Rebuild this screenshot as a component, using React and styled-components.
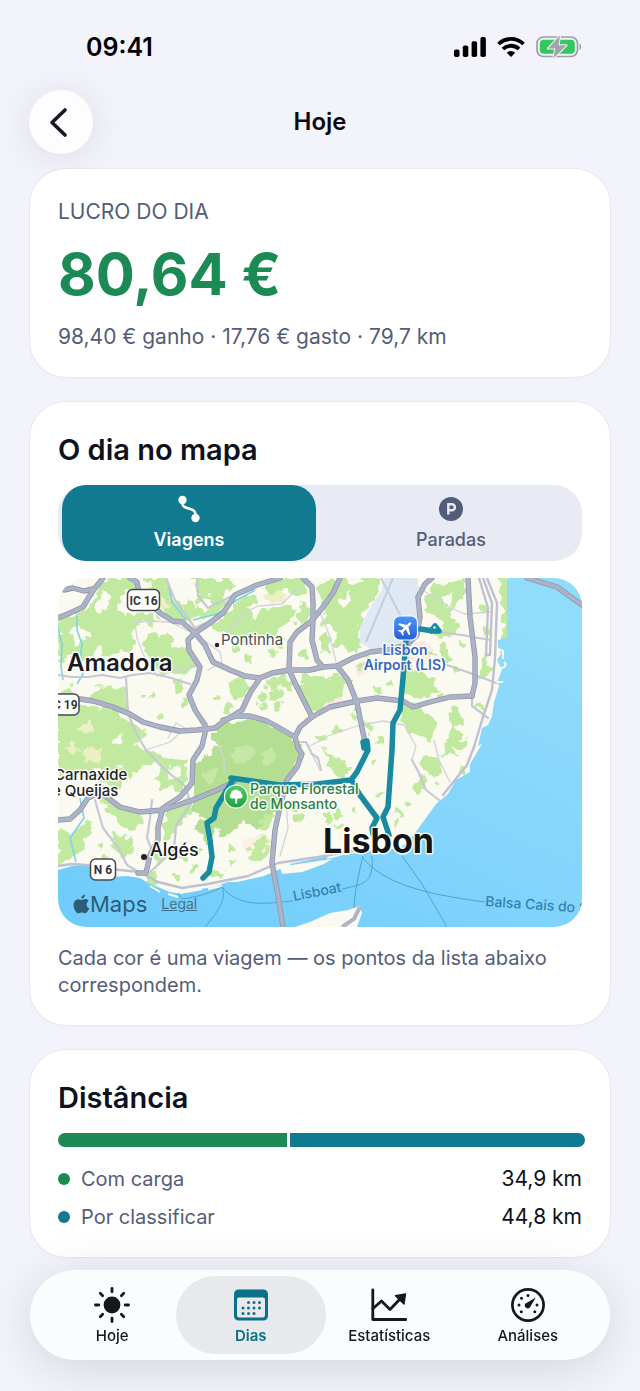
import React, { useState } from "react";
import styled, { createGlobalStyle } from "styled-components";

const c = {
  page: "#f2f3fb",
  ink: "#0e1220",
  muted: "#545d78",
  teal: "#117a90",
  green: "#1b8a54",
  track: "#e8ebf4",
};

const GlobalStyle = createGlobalStyle`
  * { box-sizing: border-box; }
  body {
    margin: 0;
    background: ${c.page};
    color: ${c.ink};
    font-family: Inter, "Liberation Sans", sans-serif;
    -webkit-font-smoothing: antialiased;
  }
  h1, h2, p, dl, dd, dt { margin: 0; }
  button { border: 0; padding: 0; font: inherit; cursor: pointer; }
  svg { display: block; }
`;

const Screen = styled.div`
  display: flex;
  flex-direction: column;
  padding-bottom: 134px;
`;

const StatusBar = styled.header`
  display: flex;
  align-items: center;
  justify-content: space-between;
  height: 90px;
  padding: 4px 58px 0 86px;
`;

const Clock = styled.time`
  font-size: 25px;
  line-height: 28px;
  font-weight: 600;
  color: #000;
`;

const StatusIcons = styled.div`
  display: flex;
  align-items: center;
  gap: 11px;
`;

const NavBar = styled.nav`
  display: grid;
  grid-template-columns: 64px 1fr 64px;
  align-items: center;
  padding: 0 29px;
`;

const BackButton = styled.button`
  display: grid;
  place-items: center;
  width: 64px;
  height: 64px;
  border-radius: 50%;
  background: #fdfdff;
  color: #16181d;
  box-shadow: 0 4px 40px rgba(0, 0, 0, 0.1);
`;

const PageTitle = styled.h1`
  font-size: 24px;
  line-height: 32px;
  font-weight: 600;
  text-align: center;
  color: #0a0a0c;
`;

const Content = styled.main`
  display: flex;
  flex-direction: column;
  gap: 25px;
  padding: 15px 30px 0;
`;

const Card = styled.section`
  display: flex;
  flex-direction: column;
  padding: 28px 28px ${(p) => p.$bottom}px;
  border-radius: 36px;
  background: #fff;
  box-shadow: 0 0 0 1px rgba(20, 30, 60, 0.04), 0 2px 8px rgba(20, 30, 60, 0.02);
`;

const CardTitle = styled.h2`
  margin-bottom: 15px;
  font-size: 29px;
  line-height: 40px;
  font-weight: 600;
`;

const Note = styled.p`
  font-size: 21px;
  line-height: 30px;
  color: ${c.muted};
`;

const Caption = styled(Note)`
  font-size: 20px;
  line-height: 27px;
`;

const Profit = styled.p`
  margin: 13px 0 14px;
  font-size: 58px;
  line-height: 68px;
  font-weight: 700;
  color: ${c.green};
`;

const Segments = styled.div`
  display: grid;
  grid-template-columns: 1fr 1fr;
  gap: 8px;
  margin-bottom: 17px;
  padding: 0 4px;
  border-radius: 28px;
  background: ${c.track};
`;

const Segment = styled.button`
  display: flex;
  flex-direction: column;
  align-items: center;
  gap: 4px;
  padding: 10px 0 8px;
  border-radius: 24px;
  background: ${(p) => (p.$active ? c.teal : "transparent")};
  color: ${(p) => (p.$active ? "#fff" : c.muted)};
  font-size: 18px;
  line-height: 26px;
  font-weight: ${(p) => (p.$active ? 600 : 500)};
`;

const MapFrame = styled.div`
  position: relative;
  margin-bottom: 18px;
  border-radius: 28px;
  overflow: hidden;
`;

const MapSvg = styled.svg`
  width: 100%;
  height: auto;
  font-family: Inter, sans-serif;
`;

const Attribution = styled.div`
  position: absolute;
  left: 15px;
  bottom: 8px;
  display: flex;
  align-items: center;
  color: #2c5c78;
  font-size: 22px;
  line-height: 30px;
  a {
    margin-left: 14px;
    color: #45728c;
    font-size: 14px;
  }
`;

const Bar = styled.div`
  display: flex;
  gap: 3px;
  height: 14px;
  margin-bottom: 13px;
`;

const BarPart = styled.span`
  flex: none;
  background: ${(p) => p.$color};
  &:first-child { border-radius: 7px 0 0 7px; }
  &:last-child { border-radius: 0 7px 7px 0; }
`;

const Legend = styled.dl`
  font-size: 21px;
  line-height: 38px;
`;

const LegendRow = styled.div`
  display: flex;
  align-items: center;
  dt { flex: 1; color: ${c.muted}; font-size: 20px; }
`;

const Dot = styled.span`
  width: 12px;
  height: 12px;
  margin-right: 11px;
  border-radius: 50%;
  background: ${(p) => p.$color};
`;

const TabBar = styled.nav`
  position: fixed;
  left: 30px;
  right: 30px;
  bottom: 31px;
  display: grid;
  grid-template-columns: repeat(4, 1fr);
  padding: 6px 13px;
  border-radius: 45px;
  background: #fbfcfe;
  box-shadow: 0 8px 50px rgba(0, 0, 0, 0.13);
`;

const Tab = styled.button`
  display: flex;
  flex-direction: column;
  align-items: center;
  gap: 4px;
  height: 78px;
  margin: 0 -6px;
  padding-top: 11px;
  border-radius: 39px;
  background: ${(p) => (p.$active ? "#e8e9ec" : "transparent")};
  color: ${(p) => (p.$active ? "#0a7188" : "#15171b")};
  font-size: 15px;
  line-height: 18px;
  font-weight: ${(p) => (p.$active ? 600 : 500)};
`;

function SignalIcon() {
  return (
    <svg width="32" height="20" viewBox="0 0 32 20" aria-hidden="true">
      <rect x="0" y="12.500" width="5.500" height="7.500" rx="1.800" />
      <rect x="8.800" y="8.500" width="5.500" height="11.500" rx="1.800" />
      <rect x="17.600" y="4.300" width="5.500" height="15.700" rx="1.800" />
      <rect x="26.400" y="0" width="5.500" height="20" rx="1.800" />
    </svg>
  );
}

function WifiIcon() {
  return (
    <svg width="28" height="20" viewBox="0 0 28 20" aria-hidden="true">
      <g fill="none" stroke="#000" strokeWidth="3.800">
        <path d="M1.500 7a18 18 0 0 1 25 0" />
        <path d="M6 12a11.500 11.500 0 0 1 16 0" />
      </g>
      <path d="M9.800 15.800a6.500 6.500 0 0 1 8.400 0L14 20z" />
    </svg>
  );
}

function BatteryIcon() {
  return (
    <svg width="46" height="24" viewBox="0 0 46 24" aria-hidden="true">
      <rect x="1" y="2" width="40.500" height="19.500" rx="6.500" fill="none" stroke="#9c9ea5" strokeWidth="1.700" />
      <path d="M43.500 8.500c2.200 1.200 2.200 5.300 0 6.500z" fill="#9c9ea5" />
      <rect x="3.800" y="4.800" width="35" height="14" rx="4" fill="#32c85b" />
      <path d="M24 .5 12 13.500h7.300L17.500 23.500 30.500 10.200h-7.800z" fill="#a2a4ac" stroke="#f2f3fb" strokeWidth="2" strokeLinejoin="round" paintOrder="stroke" />
    </svg>
  );
}

function BackIcon() {
  return (
    <svg width="32" height="32" viewBox="0 0 32 32" fill="none" stroke="currentColor" strokeWidth="3.600" strokeLinecap="round" strokeLinejoin="round" aria-hidden="true">
      <path d="M20 4 7 16.500 20 29" />
    </svg>
  );
}

function TripIcon() {
  return (
    <svg width="28" height="28" viewBox="0 0 28 28" aria-hidden="true">
      <circle cx="7.500" cy="5" r="4.200" fill="currentColor" />
      <circle cx="20.500" cy="23" r="4.200" fill="currentColor" />
      <path d="M7.500 5v4c0 6 13 3 13 10v4" fill="none" stroke="currentColor" strokeWidth="2.600" />
    </svg>
  );
}

function ParkingIcon() {
  return (
    <svg width="28" height="28" viewBox="0 0 28 28" aria-hidden="true">
      <circle cx="14" cy="14" r="12" fill="currentColor" />
      <path d="M11.300 19.500V9.300h3.600a3 3 0 0 1 0 6h-3.600" fill="none" stroke="#e8ebf4" strokeWidth="2.400" />
    </svg>
  );
}

function SunIcon() {
  return (
    <svg width="36" height="36" viewBox="0 0 36 36" aria-hidden="true">
      <circle cx="18" cy="18" r="8.400" fill="currentColor" />
      <g stroke="currentColor" strokeWidth="2.800" strokeLinecap="round">
        {[0, 45, 90, 135, 180, 225, 270, 315].map((a) => (
          <path key={a} d="M18 1.400v3.400" transform={`rotate(${a} 18 18)`} />
        ))}
      </g>
    </svg>
  );
}

const calendarDots = [
  [15.5, 15.5], [21, 15.5], [26.5, 15.5],
  [10, 21], [15.5, 21], [21, 21], [26.5, 21],
  [10, 26.5], [15.5, 26.5], [21, 26.5],
];

function CalendarIcon() {
  return (
    <svg width="36" height="36" viewBox="0 0 36 36" aria-hidden="true">
      <path
        fillRule="evenodd"
        fill="currentColor"
        d="M5.500 2.500h25a4.500 4.500 0 0 1 4.500 4.500v22a4.500 4.500 0 0 1-4.500 4.500h-25A4.500 4.500 0 0 1 1 29V7a4.500 4.500 0 0 1 4.500-4.500zM6 10.500a2 2 0 0 0-2 2v15.500a2.500 2.500 0 0 0 2.500 2.500h23a2.500 2.500 0 0 0 2.500-2.500V12.500a2 2 0 0 0-2-2z"
      />
      <g fill="currentColor">
        {calendarDots.map(([x, y]) => (
          <circle key={`${x}-${y}`} cx={x} cy={y} r="1.500" />
        ))}
      </g>
    </svg>
  );
}

function ChartIcon() {
  return (
    <svg width="36" height="36" viewBox="0 0 36 36" fill="none" stroke="currentColor" strokeWidth="2.800" strokeLinecap="round" strokeLinejoin="round" aria-hidden="true">
      <path d="M1.800 3v29.500H35" />
      <path d="M2 21.500 10.500 14l8.500 8.500L29.500 11.500" />
      <path d="M24.500 8.800 34.500 7l-1.500 10z" fill="currentColor" strokeWidth="1.400" />
    </svg>
  );
}

function GaugeIcon() {
  const ticks = [[9, 18], [11.5, 11.3], [18, 8.5], [27, 18], [24.8, 24.7], [11.3, 24.7]];
  return (
    <svg width="36" height="36" viewBox="0 0 36 36" aria-hidden="true">
      <circle cx="18" cy="18" r="15.600" fill="none" stroke="currentColor" strokeWidth="2.700" />
      {ticks.map(([x, y]) => (
        <circle key={`${x}-${y}`} cx={x} cy={y} r="1.500" fill="currentColor" />
      ))}
      <path d="M25.800 10.600 20 20.200a2.900 2.900 0 1 1-4.400-3.800z" fill="currentColor" />
    </svg>
  );
}

const parks = [
  "0,42 14,37 28,31 37,15 48,0 73,0 77,9 70,14 62,18 60,31 67,37 76,34 100,38 92,48 82,45 74,56 79,64 72,78 62,70 54,80 42,72 34,76 24,86 16,78 0,84",
  "0,2 6,6 0,12",
  "88,0 106,0 114,18 125,30 130,20 138,28 139,4 130,0 172,0 178,6 168,18 171,30 160,35 148,42 128,43 118,39 110,40 104,30 95,21",
  "150,48 168,37 180,22 198,15 196,26 210,34 226,27 238,30 237,45 222,50 214,62 200,58 186,65 178,55 168,58 160,50",
  "204,8 228,0 245,0 250,12 240,20 228,12 214,16",
  "82,64 95,54 104,60 109,55 116,60 113,68 129,71 138,87 126,97 110,92 102,98 95,82",
  "38,108 67,110 69,137 50,128 24,121 36,117",
  "0,130 24,128 48,130 68,141 88,153 80,166 83,180 75,190 62,186 54,197 36,190 24,198 12,193 0,200",
  "175,100 186,97 187,106 194,110 186,122 174,118 170,108",
  "212,101 222,98 230,100 236,112 226,109 215,114 207,108",
  "238,110 258,96 270,101 282,92 290,106 283,118 274,121 264,131 252,134 246,120",
  "260,8 278,2 291,2 304,6 300,0 324,0 318,19 304,36 300,56 306,70 290,76 286,66 278,68 275,48 262,46 268,32 262,24",
  "241,25 252,28 251,41 240,49",
  "262,56 274,60 269,80 262,70",
  "375,8 390,4 406,0 406,18 398,24 392,34 400,44 396,56 384,61 376,53 385,43 371,34 366,20",
  "441,0 455,0 455,62 444,60 445,40 442,22",
  "348,80 356,91 370,97 381,112 371,119 357,121 344,113 346,98",
  "345,124 364,130 377,143 378,158 371,166 350,153 342,140",
  "390,134 400,130 405,144 396,149 405,157 397,168 388,164 393,151",
  "420,80 430,76 429,86 438,91 431,99 420,101",
  "390,162 410,162 404,171 392,171 402,178 384,179",
  "363,182 376,176 385,190 382,198 368,194",
  "358,200 368,198 367,210 358,215 354,206",
  "264,169 272,174 284,180 292,192 286,202 274,195 272,184",
  "68,173 80,165 94,176 116,181 128,184 129,202 120,212 108,210 96,202 85,210 70,200 62,210 47,206 37,199 52,190 64,190",
  "40,213 54,221 66,230 82,237 85,244 74,252 60,248 56,240 48,231",
  "0,250 15,254 30,243 36,252 24,260 26,272 12,282 0,286",
  "52,253 64,258 75,262 76,274 66,281 57,273",
  "109,232 121,224 132,221 133,236 120,246 119,254 106,267 104,250",
  "96,272 109,278 104,286 92,294 87,302 95,310 104,306 97,297",
  "150,298 156,292 169,295 163,302",
  "196,262 207,258 212,268 203,283 190,284",
  "170,121 177,128 171,137 163,130",
  "188,244 200,228 218,238 214,252 202,250",
];

const clearings = [
  "14,52 28,50 32,58 20,66 12,60",
  "40,16 52,14 50,24 44,34 38,28",
  "140,24 152,18 156,28 146,34",
  "280,20 292,14 294,22 284,30",
  "55,160 66,156 64,165 54,168",
  "86,190 98,184 104,192 94,200",
  "110,190 120,188 122,198 112,202",
  "192,30 202,26 204,34 194,40",
  "384,18 394,16 392,26 386,30",
  "76,194 88,190 96,196 90,214 79,220 70,212",
];

const sand = [
  "18,150 30,145 38,152 28,158",
  "8,168 18,164 22,172 12,178",
  "24,172 42,168 44,180 30,188",
  "100,18 108,20 110,30 104,32",
  "204,16 222,12 230,20 214,26",
];

// Scattered small gardens; each entry is the centre and size of one patch.
const gardens = [
  [86, 118, 3], [94, 120, 3], [120, 108, 5], [126, 126, 4], [104, 138, 3], [180, 70, 4], [192, 82, 5], [214, 74, 4],
  [222, 66, 5], [205, 118, 5], [220, 128, 4], [245, 75, 5], [248, 100, 5], [304, 90, 4], [320, 112, 5], [332, 108, 3],
  [296, 140, 5], [310, 148, 4], [322, 164, 4], [278, 152, 5], [264, 160, 4], [388, 80, 5], [398, 92, 4], [404, 66, 4],
  [374, 76, 3], [420, 128, 4], [378, 205, 3], [316, 184, 3], [321, 217, 4], [342, 236, 4], [340, 245, 3], [270, 240, 6],
  [281, 237, 4], [282, 250, 3], [296, 234, 3], [174, 270, 5], [192, 275, 4], [174, 284, 3], [126, 280, 4], [136, 290, 3],
  [140, 272, 4], [46, 280, 3], [40, 268, 3], [242, 240, 6], [236, 228, 4], [424, 30, 4], [428, 54, 4], [350, 226, 3],
  [160, 120, 3], [58, 90, 3], [14, 104, 3], [8, 116, 4], [220, 180, 4], [118, 298, 3], [404, 192, 4], [206, 128, 4],
  [218, 118, 5], [198, 126, 3], [262, 116, 5], [300, 130, 4], [382, 118, 3], [386, 72, 5], [392, 48, 4], [310, 84, 3],
];

const streets = [
  "77,45 79,60 85,76 99,98 120,92 142,86",
  "77,45 90,43 112,44 137,56 162,74 164,84 150,92",
  "168,56 186,35 200,28 224,26 240,10",
  "88,172 112,164 127,150 118,145 110,160",
  "361,10 372,17 391,29 406,36 434,34",
  "262,34 272,59 278,84",
  "252,168 270,158 299,148 325,143 346,147 358,168 354,182",
  "252,172 262,192",
  "376,162 381,182 392,204",
  "159,164 166,180 166,194",
  "228,225 230,250 222,278",
];

const avenues = [
  "0,97 14,99 30,99 44,97 62,100 74,97 92,95 110,99 132,106",
  "68,100 70,135 78,155 88,172 105,190 127,208 133,225 118,248 116,272 92,294",
  "108,0 116,20 124,32 137,50 160,39",
  "139,0 140,18 150,30 174,18",
  "37,222 45,250 59,268 69,287 84,296",
  "94,222 92,240 89,260 94,272 90,280",
  "378,54 404,57 432,62",
  "386,86 412,95 438,105",
  "414,118 414,128 430,140",
  "354,182 361,195 368,212 381,222",
  "240,164 248,164 254,176 260,180 263,192",
];

const coastRoads = [
  "0,288 14,286 28,287 52,291 82,294 100,304 124,310 150,306 190,298 220,285 260,279 300,272",
  "425,0 434,25 432,77 428,77 430,30 421,0",
  "429,0 439,25 437,80 434,112 425,139 415,172 417,166 409,187 385,217",
];

const highways = [
  "0,40 12,35 25,29 34,14 45,0",
  "6,12 15,10 26,13 35,11",
  "72,0 79,4 81,14 102,35 115,43 124,44 137,55 147,67 155,84 172,92 187,98 202,100 214,95 232,92 252,92 265,89 279,88 295,80 312,74 330,72 350,66 359,57 362,39 360,19 367,6 374,0",
  "137,55 149,47 165,35 177,17 199,7 222,0",
  "137,55 130,62 131,72 142,89 139,102 131,117 137,132 147,147 147,155 144,168 135,182 134,205 122,219 105,230 100,249 100,262 92,277 88,295 80,295",
  "22,121 35,123 55,129 72,136 85,144 102,149 122,153 139,152 157,150 165,144 184,132 192,115 202,100",
  "165,142 179,138 192,138 209,143 225,152 237,159 240,170 244,176 239,189 229,202 222,229 217,252 214,285 219,312 225,349",
  "237,159 242,149 254,139 272,129 299,123 319,120 345,123 355,129 372,124 392,119 414,118",
  "245,0 254,9 255,25 255,42 239,54 232,64 231,92 239,109 254,139",
  "255,42 254,62 259,82 265,89",
  "252,45 265,29 275,15 282,0",
  "279,88 290,102 299,125 304,150 307,164",
  "410,0 412,39 417,79 417,105 414,118",
  "469,0 499,9 524,27",
  "0,242 12,241 22,232 30,220 42,214 62,229 82,234 105,232 135,222 159,212 176,204",
];

const trips = [
  "145,300 151,294 154,279 152,262 149,245 156,240 158,230 175,202 173,200 222,207 259,206 293,202 299,194 310,172 309,163 305,164 306,170",
  "294,203 302,217 319,240 314,250 315,256",
  "362,51 376,53 381,53 377,48 373,53",
  "348,62 345,100 342,132 335,145 334,172 330,229 325,239 331,257",
];

const patch = ([x, y, r], i) => {
  const corners = 7;
  return Array.from({ length: corners }, (_, k) => {
    const a = (k / corners) * Math.PI * 2 + i;
    const d = r * (0.7 + 0.5 * Math.abs(Math.sin(i * 7 + k * 5)));
    return `${(x + d * Math.cos(a)).toFixed(1)},${(y + d * Math.sin(a)).toFixed(1)}`;
  }).join(" ");
};

function Lines({ items, ...rest }) {
  return (
    <g fill="none" strokeLinejoin="round" strokeLinecap="round" {...rest}>
      {items.map((points) => (
        <polyline key={points} points={points} />
      ))}
    </g>
  );
}

function RoadShield({ x, y, width, label }) {
  return (
    <g>
      <rect x={x} y={y} width={width} height="21" rx="5" fill="#fff" stroke="#454950" strokeWidth="1.500" />
      <text x={x + width / 2} y={y + 15} textAnchor="middle" fontSize="12" fontWeight="700" fill="#33363b" fontFamily="Roboto, sans-serif">
        {label}
      </text>
    </g>
  );
}

function DayMap() {
  return (
    <MapSvg viewBox="0 0 524 349" role="img" aria-label="Mapa das viagens em Lisboa">
      <defs>
        <linearGradient id="water" x1="0" y1="1" x2="0.700" y2="0">
          <stop offset="0" stopColor="#6ecbfb" />
          <stop offset="0.550" stopColor="#84d5fb" />
          <stop offset="1" stopColor="#8fdcfb" />
        </linearGradient>
        <linearGradient id="airportPin" x1="0" y1="0" x2="0" y2="1">
          <stop offset="0" stopColor="#4c97fb" />
          <stop offset="1" stopColor="#2560d8" />
        </linearGradient>
        <linearGradient id="parkPin" x1="0" y1="0" x2="0" y2="1">
          <stop offset="0" stopColor="#4fce63" />
          <stop offset="1" stopColor="#1fa142" />
        </linearGradient>
        <filter id="ragged" x="0" y="0" width="524" height="349" filterUnits="userSpaceOnUse">
          <feTurbulence type="fractalNoise" baseFrequency="0.110" numOctaves="2" seed="4" />
          <feDisplacementMap in="SourceGraphic" scale="14" xChannelSelector="R" yChannelSelector="G" />
        </filter>
      </defs>
      <rect width="524" height="349" fill="#fbfaf1" />
      <g fill="#fbe9e2">
        <path d="M262 120l16-8 8 10-12 10-12-2zM296 88l10-6 4 12-10 4z" />
        <path d="M348 68l18-6 10 10-6 12-20-2z" />
        <path fill="#fbf0e2" d="M184 262l20-6 14 8-4 10-26 2z" />
      </g>
      <g filter="url(#ragged)">
        <g fill="#c1e9a0">
          {parks.map((points) => <polygon key={points} points={points} />)}
          {gardens.map((g, i) => <polygon key={i} points={patch(g, i)} />)}
        </g>
        <g fill="#fbfaf1">
          {clearings.map((points) => <polygon key={points} points={points} />)}
        </g>
        <g fill="#eaf0c4">
          {sand.map((points) => <polygon key={points} points={points} />)}
        </g>
        <polygon
          fill="#b4df93"
          points="152,158 168,146 192,140 225,153 238,164 243,176 230,200 222,222 214,240 206,236 198,250 184,244 170,259 160,254 148,264 139,250 144,236 132,232 136,214 137,186 150,176 160,165"
        />
        <g fill="#c5e8a6">
          <polygon points="172,176 184,168 196,172 192,184 178,186" />
          <polygon points="204,176 214,170 216,182 206,186" />
          <polygon points="144,196 156,190 160,200 148,206" />
        </g>
      </g>
      <polygon fill="#dfe8f3" points="326,0 360,0 360,19 362,42 352,67 319,74 302,65 302,49 315,25 324,12" />
      <g fill="none" stroke="#c3cede" strokeWidth="2">
        <path d="M308 64 335 0M323 0l29 56" />
      </g>
      <polygon
        fill="url(#water)"
        points="449,0 449,59 440,62 440,69 443,76 439,82 444,92 439,104 441,108 436,124 434,138 430,147 424,150 420,168 424,166 412,186 412,194 398,202 390,216 378,226 365,244 352,262 342,270 318,272 285,277 274,280 259,282 240,287 222,291 206,298 179,304 170,304 156,309 135,312 124,316 112,314 92,306 82,300 69,298 52,299 40,292 29,286 14,288 0,292 0,349 524,349 524,0"
      />
      <path d="M232 286l38-8-3 5-34 6z" fill="#7fd0f8" />
      <path d="M222 289l2 7 20-2 22-8 8-5-14 2-20 3z" fill="#fbfaf1" />
      <polygon fill="#fbfaf1" points="237,349 252,344 272,335 290,332 302,328 304,335 299,349" />
      <g fill="none" stroke="#fbfaf1" strokeWidth="2">
        <path d="M440 71l5 2v8M443 90c4 0 6-3 3-6M436 104h9" />
        <path d="M92 308l10 6M110 316l10 3M128 314l16-3M150 311l14-3" />
      </g>
      <g fill="none" stroke="#4fa3d3" strokeWidth="1">
        <path d="M164 309c-10 6-26 10-40 12l-4-6M164 309c4 10 0 20-17 40M164 309c18 22 45 16 71 14M305 278c-6 24-8 36-9 52M305 280c20 25 60 36 122 44M344 278l20 28 25 43M314 278c2 28-8 28-30 33" />
      </g>
      <g fill="none" stroke="#7fd2ea" strokeWidth="1.600">
        <path d="M19 38v14l5 14-2 18 3 12-6 10M0 50l4 16-1 22 2 14M110 4l4 20 14 18M135 42l24-6 20-14 18-10M22 220l4 20-14 20 6 24" />
      </g>
      <Lines items={streets} stroke="#d2d2dc" strokeWidth="1.300" />
      <Lines items={avenues} stroke="#c6c8d5" strokeWidth="2.200" />
      <Lines items={coastRoads} stroke="#bfc0d0" strokeWidth="2.400" />
      <Lines items={highways} stroke="#9097ab" strokeWidth="5.400" />
      <Lines items={highways} stroke="#adb3c6" strokeWidth="3.800" />
      <path d="M284 349l12-8 6-12" fill="none" stroke="#aeb3c6" strokeWidth="4" />
      <Lines items={trips} stroke="#188ba0" strokeWidth="5.500" />
      <circle cx="376.500" cy="49.500" r="1.200" fill="#fff" />

      <RoadShield x={69.5} y={11.5} width={32} label="IC 16" />
      <RoadShield x={-10} y={116} width={31} label="IC 19" />
      <RoadShield x={32.5} y={281} width={25} label="N 6" />

      <rect x="335.500" y="38" width="24" height="24" rx="6" fill="url(#airportPin)" stroke="#fff" strokeWidth="1.200" />
      <path
        d="M0-9c1 0 1.500 1.200 1.500 2.600v3L9 1.300v1.900L1.500 1v4.200L4 7.200v1.500L0 7.600l-4 1.100V7.200l2.500-2V1L-9 3.200V1.300l7.500-4.700v-3C-1.500-7.800-1-9 0-9z"
        fill="#fff"
        transform="translate(347.500 50) rotate(45) scale(0.850)"
      />
      <circle cx="178" cy="218.500" r="11.500" fill="url(#parkPin)" stroke="#fff" strokeWidth="1.200" />
      <path d="M177.200 225.500v-5h-3a2.600 2.600 0 0 1-1-5 3 3 0 0 1 3-3.200 3 3 0 0 1 4.500.400 2.700 2.700 0 0 1 2.500 3 2.500 2.500 0 0 1-1 4.800h-3v5z" fill="#fff" />

      <circle cx="159" cy="67" r="2.200" fill="#222" />
      <circle cx="86" cy="279" r="3" fill="#222" />
      <g stroke="#fff" strokeWidth="3" strokeOpacity="0.850" paintOrder="stroke" strokeLinejoin="round">
        <text x="9" y="93" fontSize="24" fontWeight="600" fill="#1b1b1b">Amadora</text>
        <text x="163" y="67" fontSize="15" fontWeight="400" fill="#4c4f54">Pontinha</text>
        <text x="-4" y="202" fontSize="15" fontWeight="500" fill="#222">Carnaxide</text>
        <text x="-6" y="218" fontSize="15" fontWeight="500" fill="#222">e Queijas</text>
        <text x="92" y="278" fontSize="18" fontWeight="500" fill="#1b1b1b">Algés</text>
        <text x="265" y="275" fontSize="34" fontWeight="700" fill="#141414">Lisbon</text>
        <g fontSize="14" fontWeight="600" fill="#3467bd" textAnchor="middle">
          <text x="347" y="77">Lisbon</text>
          <text x="347" y="92">Airport (LIS)</text>
        </g>
        <g fontSize="14" fontWeight="500" fill="#2b8045">
          <text x="192" y="216">Parque Florestal</text>
          <text x="192" y="231">de Monsanto</text>
        </g>
      </g>
      <g fontSize="14" fontWeight="500" fill="#3480b4">
        <text transform="translate(236 323) rotate(-11)">Lisboat</text>
        <text transform="translate(427 328) rotate(4)">Balsa Cais do S</text>
      </g>
    </MapSvg>
  );
}

function AppleMark() {
  return (
    <svg width="17" height="20" viewBox="0 0 17 20" fill="currentColor" aria-hidden="true">
      <path d="M12 .5c.2 2-1.600 4.200-3.700 4.200C8 2.700 9.900.7 12 .5zM15.600 7c-1.300.8-2 2-2 3.500 0 1.700 1 3.100 2.600 3.800-.9 2.600-2.500 5-4.200 5-1.200 0-1.700-.8-3.200-.8s-2 .8-3.200.8C3.200 19.300.6 15.200.6 11.200c0-3.700 2.300-6 4.800-6 1.400 0 2.500.9 3.400.9s2.200-1 3.900-1c1.100 0 2.200.6 2.900 1.900z" />
    </svg>
  );
}

const distance = [
  { label: "Com carga", km: 34.9, color: c.green },
  { label: "Por classificar", km: 44.8, color: c.teal },
];
const totalKm = distance.reduce((sum, d) => sum + d.km, 0);
const formatKm = (km) => `${km.toFixed(1).replace(".", ",")} km`;

const views = [
  { id: "viagens", label: "Viagens", Icon: TripIcon },
  { id: "paradas", label: "Paradas", Icon: ParkingIcon },
];

const tabs = [
  { label: "Hoje", Icon: SunIcon },
  { label: "Dias", Icon: CalendarIcon },
  { label: "Estatísticas", Icon: ChartIcon },
  { label: "Análises", Icon: GaugeIcon },
];

export default function App() {
  const [view, setView] = useState("viagens");
  const [tab, setTab] = useState("Dias");

  return (
    <>
      <GlobalStyle />
      <Screen>
        <StatusBar>
          <Clock>09:41</Clock>
          <StatusIcons>
            <SignalIcon />
            <WifiIcon />
            <BatteryIcon />
          </StatusIcons>
        </StatusBar>
        <NavBar>
          <BackButton type="button" aria-label="Voltar">
            <BackIcon />
          </BackButton>
          <PageTitle>Hoje</PageTitle>
        </NavBar>

        <Content>
          <Card $bottom={25}>
            <Note>LUCRO DO DIA</Note>
            <Profit>80,64 €</Profit>
            <Note>98,40 € ganho · 17,76 € gasto · 79,7 km</Note>
          </Card>

          <Card $bottom={26}>
            <CardTitle>O dia no mapa</CardTitle>
            <Segments>
              {views.map(({ id, label, Icon }) => (
                <Segment key={id} type="button" aria-pressed={view === id} $active={view === id} onClick={() => setView(id)}>
                  <Icon />
                  {label}
                </Segment>
              ))}
            </Segments>
            <MapFrame>
              <DayMap />
              <Attribution>
                <AppleMark />
                Maps
                <a href="#legal">Legal</a>
              </Attribution>
            </MapFrame>
            <Caption>Cada cor é uma viagem — os pontos da lista abaixo correspondem.</Caption>
          </Card>

          <Card $bottom={21}>
            <CardTitle>Distância</CardTitle>
            <Bar>
              {distance.map((d) => (
                <BarPart key={d.label} $color={d.color} style={{ width: `${(d.km / totalKm) * 100}%` }} />
              ))}
            </Bar>
            <Legend>
              {distance.map((d) => (
                <LegendRow key={d.label}>
                  <Dot $color={d.color} />
                  <dt>{d.label}</dt>
                  <dd>{formatKm(d.km)}</dd>
                </LegendRow>
              ))}
            </Legend>
          </Card>
        </Content>
      </Screen>

      <TabBar>
        {tabs.map(({ label, Icon }) => (
          <Tab key={label} type="button" aria-current={tab === label ? "page" : undefined} $active={tab === label} onClick={() => setTab(label)}>
            <Icon />
            {label}
          </Tab>
        ))}
      </TabBar>
    </>
  );
}
